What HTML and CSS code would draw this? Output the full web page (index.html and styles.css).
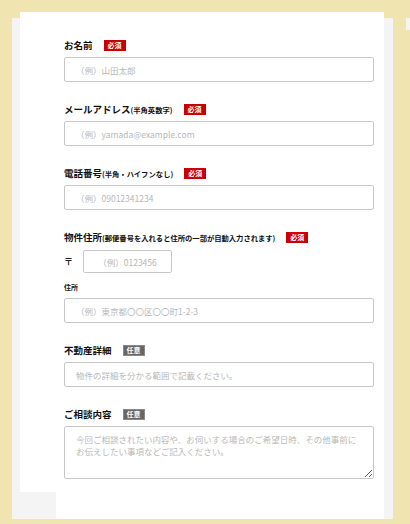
FILE: index.html
```html
<!DOCTYPE html>
<html lang="ja">
<head>
    <meta charset="UTF-8">
    <meta name="viewport" content="width=device-width, initial-scale=1.0">
    <title>お問い合わせフォーム</title>
    <link rel="stylesheet" href="styles.css">
</head>
<body>

<div class="page">
    <div class="panel">
        <!-- Contact form card -->
        <form class="card">
            <div class="field">
                <div class="label-row">
                    <label class="label">お名前</label>
                    <span class="badge req">必須</span>
                </div>
                <input class="input" type="text" placeholder="（例）山田太郎">
            </div>

            <div class="field">
                <div class="label-row">
                    <label class="label">メールアドレス<span class="note">(半角英数字)</span></label>
                    <span class="badge req">必須</span>
                </div>
                <input class="input" type="email" placeholder="（例）yamada@example.com">
            </div>

            <div class="field">
                <div class="label-row">
                    <label class="label">電話番号<span class="note">(半角・ハイフンなし)</span></label>
                    <span class="badge req">必須</span>
                </div>
                <input class="input" type="tel" placeholder="（例）09012341234">
            </div>

            <div class="field">
                <div class="label-row">
                    <label class="label">物件住所<span class="note">(郵便番号を入れると住所の一部が自動入力されます)</span></label>
                    <span class="badge req">必須</span>
                </div>
                <div class="zip-row">
                    <span class="zip-mark">〒</span>
                    <input class="input zip" type="text" placeholder="（例）0123456">
                </div>
                <div class="sub-label">住所</div>
                <input class="input" type="text" placeholder="（例）東京都〇〇区〇〇町1-2-3">
            </div>

            <div class="field">
                <div class="label-row">
                    <label class="label">不動産詳細</label>
                    <span class="badge opt">任意</span>
                </div>
                <input class="input" type="text" placeholder="物件の詳細を分かる範囲で記載ください。">
            </div>

            <div class="field last">
                <div class="label-row">
                    <label class="label">ご相談内容</label>
                    <span class="badge opt">任意</span>
                </div>
                <textarea class="input textarea" placeholder="今回ご相談されたい内容や、お伺いする場合のご希望日時、その他事前にお伝えしたい事項などご記入ください。"></textarea>
            </div>
        </form>
        <div class="card-foot"></div>
    </div>
    <div class="side-tab"></div>
</div>

</body>
</html>
```

FILE: styles.css
```css
* { margin: 0; padding: 0; box-sizing: border-box; }
body { background: #f0e4b0; font-family: "Noto Sans CJK JP", "Noto Sans", sans-serif; color: #222; }

.page { display: flex; align-items: flex-start; padding: 18px 0 5px 12px; }
.panel { width: 381px; height: 501px; background: #f4f4f4; }
.side-tab { width: 4px; height: 12px; margin-left: 13px; background: #f4f4f4; }

/* Form card */
.card { width: 364px; height: 480px; margin: -6px 0 0 8px; padding: 28px 10px 13px 44px; background: #fff; }
.card-foot { width: 328px; height: 27px; margin-left: 44px; background: #fff; }

.field { margin-bottom: 22px; }
.field.last { margin-bottom: 0; }
.label-row { display: flex; align-items: center; height: 11px; margin-bottom: 6px; }
.label { font-size: 9.5px; font-weight: bold; line-height: 11px; white-space: nowrap; color: #111; }
.label .note { font-size: 7.3px; }
.badge { display: inline-block; height: 11px; padding: 0 4px; margin-left: 11px; font-size: 7px; line-height: 11px; font-weight: bold; color: #fff; }
.badge.req { background: #c80000; }
.badge.opt { background: #666; border: 1px solid #8a8a8a; line-height: 9px; padding: 0 3px; }

.input { display: block; width: 310px; height: 25px; padding: 0 11px; border: 1px solid #c8c8c8; border-radius: 2px; background: #fff; font-family: inherit; font-size: 8.5px; color: #222; outline: none; }
.input::placeholder { color: #b8b8b8; }

.zip-row { display: flex; align-items: center; margin-top: 7px; }
.zip-mark { width: 19px; font-size: 9px; font-weight: bold; }
.input.zip { width: 89px; height: 23px; text-align: center; }
.sub-label { margin: 9px 0 6px; font-size: 7px; font-weight: bold; line-height: 10px; }

.textarea { height: 53px; padding: 7px 11px; line-height: 11.5px; resize: vertical; }
```
